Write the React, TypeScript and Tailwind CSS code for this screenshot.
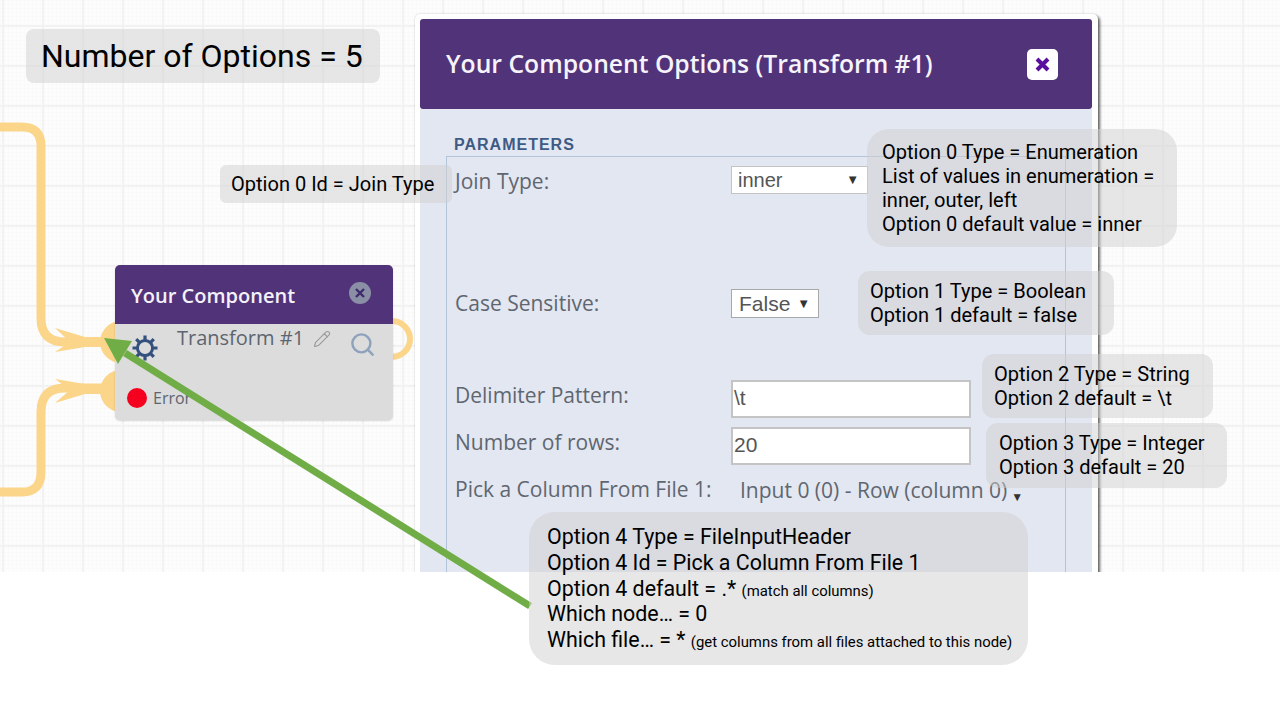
import type { ReactNode } from "react";
import { Search, Pencil } from "lucide-react";

function Callout({ className, lines }: { className: string; lines: ReactNode[] }) {
  return (
    <div className={"absolute bg-[#cfcfcf]/50 font-['Roboto',sans-serif] text-black " + className}>
      {lines.map((l, i) => (
        <div key={i} className="whitespace-nowrap">{l}</div>
      ))}
    </div>
  );
}

function Wires() {
  return (
    <svg className="absolute left-0 top-0" width="420" height="572" fill="none">
      <path d="M0 127H22Q41 127 41 146V318Q41 342 65 342H110" stroke="#fbd58a" strokeWidth="9" />
      <path d="M0 492H22Q41 492 41 472V412Q41 388 65 388H110" stroke="#fbd58a" strokeWidth="9" />
      <path d="M55 328L85 337H110V347H85L55 352L70 342Z" fill="#fbd58a" />
      <path d="M55 379L85 384H110V394H85L55 403L70 390Z" fill="#fbd58a" />
      <circle cx="121" cy="342" r="21" fill="#fbd58a" />
      <circle cx="121" cy="391" r="21" fill="#fbd58a" />
      <circle cx="392" cy="339" r="18" stroke="#fbd58a" strokeWidth="6" />
    </svg>
  );
}

function Gear() {
  return (
    <svg width="28" height="28" viewBox="0 0 28 28" fill="none" stroke="#34507c" className="mt-[10px] shrink-0">
      <circle cx="14" cy="14" r="7.6" strokeWidth="3" />
      <path d="M14 1.5V6M14 22V26.5M1.5 14H6M22 14H26.5M5.2 5.2L8.4 8.4M19.6 19.6L22.8 22.8M22.8 5.2L19.6 8.4M8.4 19.6L5.2 22.8" strokeWidth="3.2" />
    </svg>
  );
}

function Node() {
  return (
    <div className="absolute left-[115px] top-[265px] flex h-[155px] w-[278px] flex-col overflow-hidden rounded-[5px] bg-[#dcdcdc] font-['Open_Sans',sans-serif] shadow-[0_1px_2px_rgba(0,0,0,0.15)]">
      <div className="flex h-[59px] shrink-0 items-center justify-between bg-[#51337a] pl-[16px] pr-[22px]">
        <span className="mt-[2px] text-[20px] font-semibold text-[#f4f1f8]">Your Component</span>
        <span className="mb-[3px] flex h-[22px] w-[22px] items-center justify-center rounded-full bg-[#8b8fa6]">
          <svg width="10" height="10" viewBox="0 0 10 10" stroke="#3e2a6c" strokeWidth="2.4"><path d="M1 1L9 9M9 1L1 9" /></svg>
        </span>
      </div>
      <div className="flex h-[50px] items-start pl-[16px]">
        <Gear />
        <span className="ml-[18px] text-[20px] leading-[28px] text-[#5c6570]">Transform #1</span>
        <Pencil className="ml-[9px] mt-[6px] text-[#9a9a9a]" size={18} strokeWidth={1.5} />
        <Search className="ml-[18px] mt-[7px] text-[#8ea2bc]" size={27} strokeWidth={2.2} />
      </div>
      <div className="mt-[14px] flex items-center gap-[6px] pl-[12px]">
        <span className="h-[20px] w-[20px] rounded-full bg-[#f5001e]" />
        <span className="text-[16px] leading-[20px] text-[#5c6570]">Error</span>
      </div>
    </div>
  );
}

const labelClass = "w-[276px] shrink-0 text-[21px] leading-[30px] text-[#5f6670] whitespace-nowrap";
const fieldClass = "h-[38px] w-[240px] border-2 border-[#c4c4c4] bg-white pl-[1px] font-['Liberation_Sans',sans-serif] text-[21px] leading-[31px] text-[#555]";

function Modal() {
  return (
    <div className="absolute left-[415px] top-[14px] h-[620px] w-[683px] rounded-[5px] bg-white pb-[5px] pl-[5px] pr-[6px] pt-[5px] font-['Open_Sans',sans-serif] shadow-[0_0_2px_rgba(0,0,0,0.18),2px_2px_3px_rgba(0,0,0,0.6)]">
      <div className="flex h-[90px] items-center justify-between rounded-[3px] bg-[#51337a] pl-[26px] pr-[34px]">
        <span className="text-[24.7px] font-semibold text-[#f6f4fa]">Your Component Options (Transform #1)</span>
        <span className="flex h-[31px] w-[31px] items-center justify-center rounded-[5px] bg-white">
          <svg width="15" height="15" viewBox="0 0 15 15" stroke="#5a0f9e" strokeWidth="4"><path d="M2 2L13 13M13 2L2 13" /></svg>
        </span>
      </div>
      <div className="h-[520px] bg-[#e3e7f1] pl-[26px] pt-[24px]">
        <div className="pl-[8px] font-['Liberation_Sans',sans-serif] text-[16px] font-bold leading-[23px] tracking-[1px] text-[#3f5a85]">PARAMETERS</div>
        <div className="flex h-[480px] w-[620px] flex-col border border-[#b4c4d8] pl-[8px] pt-[9px]">
          <div className="flex h-[28px] items-center">
            <span className={labelClass + " mt-[1px]"}>Join Type:</span>
            <div className="flex h-[28px] w-[137px] items-center justify-between border border-[#c4c4c4] bg-white pl-[6px] pr-[8px] font-['Liberation_Sans',sans-serif] text-[20px] text-[#555]">
              inner<span className="text-[13px] text-[#333]">▼</span>
            </div>
          </div>
          <div className="mt-[95px] flex h-[29px] items-center">
            <span className={labelClass + " -mt-[1px]"}>Case Sensitive:</span>
            <div className="flex h-[29px] w-[88px] items-center justify-between border border-[#a8a8a8] bg-white pl-[7px] pr-[8px] font-['Liberation_Sans',sans-serif] text-[21px] text-[#555]">
              False<span className="text-[13px] text-[#333]">▼</span>
            </div>
          </div>
          <div className="mt-[62px] flex h-[38px] items-start">
            <span className={labelClass}>Delimiter Pattern:</span>
            <div className={fieldClass}>\t</div>
          </div>
          <div className="mt-[9px] flex h-[38px] items-start">
            <span className={labelClass}>Number of rows:</span>
            <div className={fieldClass}>20</div>
          </div>
          <div className="mt-[10px] flex h-[28px] items-center">
            <span className={labelClass}>Pick a Column From File 1:</span>
            <span className="ml-[9px] mt-[1px] whitespace-nowrap text-[21px] leading-[28px] text-[#5f6670]">Input 0 (0) - Row (column 0)</span>
            <span className="ml-[4px] mt-[16px] text-[12px] leading-none text-[#333]">▼</span>
          </div>
        </div>
      </div>
    </div>
  );
}

export default function App() {
  return (
    <div className="relative h-[720px] w-[1280px] overflow-hidden bg-white">
      <div className="absolute inset-x-0 top-0 h-[572px] overflow-hidden bg-[#fdfdfd] bg-[linear-gradient(#f2f2f2_2px,transparent_2px),linear-gradient(90deg,#f2f2f2_2px,transparent_2px),linear-gradient(#fafafa_1px,transparent_1px),linear-gradient(90deg,#fafafa_1px,transparent_1px)] bg-[size:40px_40px,40px_40px,4px_4px,4px_4px] bg-[position:2px_25px,2px_25px,0_0,0_0]">
        <Wires />
        <Node />
        <Modal />
      </div>

      <svg className="pointer-events-none absolute left-0 top-0 z-10" width="560" height="620" fill="none">
        <path d="M530 606L125 353" stroke="#70ad47" strokeWidth="7" />
        <path d="M104 338L132 341L118 364Z" fill="#70ad47" />
      </svg>

      <div className="absolute z-20">
        <Callout className="left-[26px] top-[29px] flex h-[54px] w-[354px] items-center rounded-[8px] pl-[15px] text-[32px]" lines={["Number of Options = 5"]} />
        <Callout className="left-[220px] top-[165px] flex h-[38px] w-[232px] items-center rounded-[6px] pl-[11px] text-[20.05px]" lines={["Option 0 Id = Join Type"]} />
        <Callout className="left-[867px] top-[129px] h-[118px] w-[310px] rounded-[22px] pl-[15px] pt-[11px] text-[20.05px] leading-[24px]" lines={["Option 0 Type = Enumeration", "List of values in enumeration =", "inner, outer, left", "Option 0 default value = inner"]} />
        <Callout className="left-[858px] top-[271px] h-[64px] w-[256px] rounded-[12px] pl-[12px] pt-[8px] text-[20.05px] leading-[24px]" lines={["Option 1 Type = Boolean", "Option 1 default = false"]} />
        <Callout className="left-[982px] top-[354px] h-[64px] w-[231px] rounded-[12px] pl-[12px] pt-[8px] text-[20.05px] leading-[24px]" lines={["Option 2 Type = String", "Option 2 default = \\t"]} />
        <Callout className="left-[986px] top-[423px] h-[65px] w-[241px] rounded-[12px] pl-[13px] pt-[8px] text-[20.05px] leading-[24px]" lines={["Option 3 Type = Integer", "Option 3 default = 20"]} />
        <Callout
          className="left-[529px] top-[512px] h-[153px] w-[499px] rounded-[26px] pl-[18px] pt-[12px] text-[21.4px] leading-[25.75px]"
          lines={[
            "Option 4 Type = FileInputHeader",
            "Option 4 Id = Pick a Column From File 1",
            <>Option 4 default = .* <span className="text-[14.9px] leading-none">(match all columns)</span></>,
            "Which node… = 0",
            <>Which file… = * <span className="text-[14.9px] leading-none">(get columns from all files attached to this node)</span></>,
          ]}
        />
      </div>
    </div>
  );
}
